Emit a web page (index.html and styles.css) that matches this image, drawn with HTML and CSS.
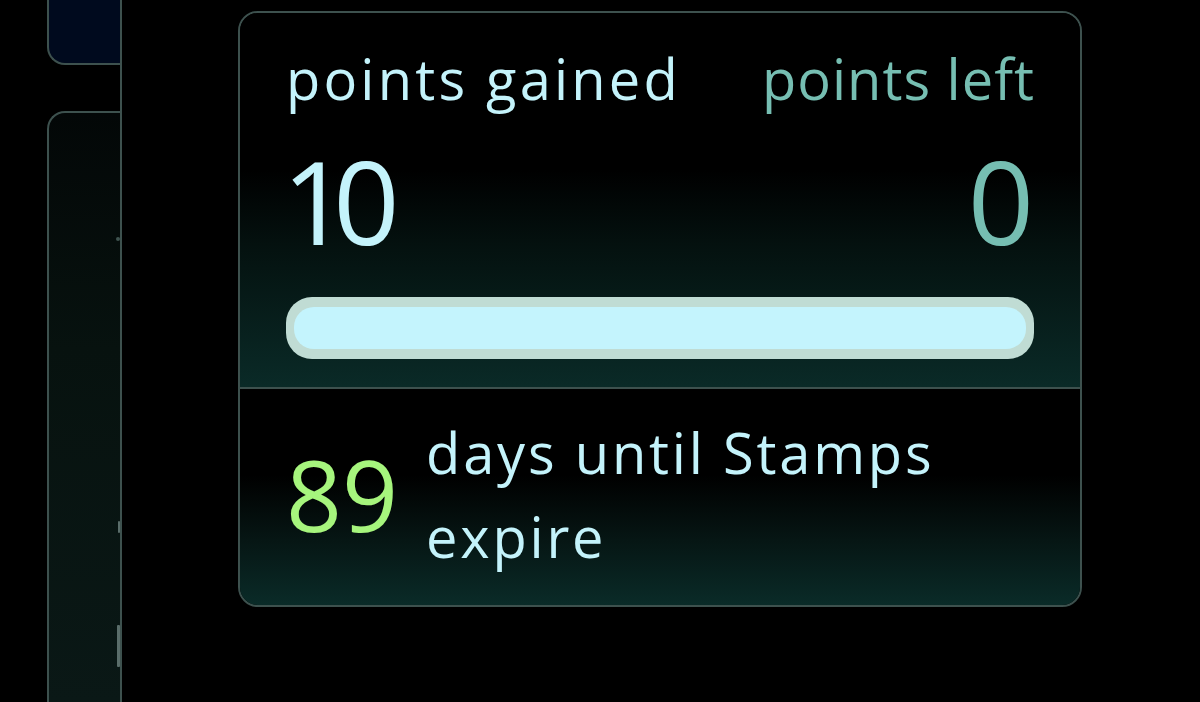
FILE: index.html
```html
<!DOCTYPE html>
<html>
<head>
<meta charset="utf-8">
<link rel="stylesheet" href="styles.css">
</head>
<body>
<div class="page">
  <aside class="sidebar">
    <div class="side-card side-top"></div>
    <div class="side-card side-bottom">
      <span class="mark mark-a"></span>
      <span class="mark mark-b"></span>
      <span class="mark mark-c"></span>
    </div>
  </aside>
  <main class="main">
    <section class="card">
      <div class="points">
        <div class="labels">
          <span class="label-gained">points gained</span>
          <span class="label-left">points left</span>
        </div>
        <div class="values">
          <span class="value-gained">10</span>
          <span class="value-left">0</span>
        </div>
        <div class="bar"><div class="bar-fill" style="width:100%"></div></div>
      </div>
      <div class="expiry">
        <span class="days">89</span>
        <span class="expiry-text">days until Stamps<br>expire</span>
      </div>
    </section>
  </main>
</div>
</body>
</html>
```
FILE: styles.css
```css
html, body {
  margin: 0;
  padding: 0;
  background: #000;
  width: 1200px;
  height: 702px;
  overflow: hidden;
  font-family: "Open Sans", "Lato", sans-serif;
}
.page {
  display: flex;
  height: 702px;
}
.sidebar {
  width: 73px;
  flex: none;
  border-right: 2px solid #3d514e;
  display: flex;
  flex-direction: column;
  gap: 46px;
  padding-left: 47px;
  box-sizing: content-box;
}
.side-card {
  border: 2px solid #3d514e;
  border-right: none;
}
.side-top {
  height: 67px;
  margin-top: -2px;
  border-top: none;
  border-bottom-left-radius: 18px;
  background: #000a1e;
  box-sizing: border-box;
}
.side-bottom {
  flex: 1;
  border-bottom: none;
  border-top-left-radius: 18px;
  background: linear-gradient(180deg, #030707 0%, #07120f 40%, #0a1816 100%);
  position: relative;
}
.mark {
  position: absolute;
  right: 0;
  width: 3px;
  background: #5a6d6a;
  border-radius: 1px;
}
.mark-a { top: 124px; height: 4px; width: 4px; border-radius: 2px; background: #3f5350; }
.mark-b { top: 408px; height: 12px; width: 2px; }
.mark-c { top: 512px; height: 42px; }
.main {
  flex: 1;
  padding: 11px 0 0 116px;
}
.card {
  width: 844px;
  height: 596px;
  box-sizing: border-box;
  border: 2px solid #3d514e;
  border-radius: 20px;
  overflow: hidden;
  display: flex;
  flex-direction: column;
}
.points {
  height: 374px;
  border-bottom: 2px solid #3d514e;
  padding: 0 46px 0 46px;
  box-sizing: content-box;
  background: linear-gradient(180deg, #000 0%, #000 42%, #04110f 62%, #0a2a27 100%);
  display: flex;
  flex-direction: column;
}
.labels {
  display: flex;
  justify-content: space-between;
  font-size: 56px;
  line-height: 60px;
  margin-top: 35px;
}
.label-gained { color: #c4f3fb; letter-spacing: 3.2px; }
.label-left { color: #76beb2; letter-spacing: 1px; margin-right: -1px; }
.values {
  display: flex;
  justify-content: space-between;
  font-size: 116px;
  line-height: 120px;
  margin-top: 32px;
}
.value-gained { color: #c4f3fb; letter-spacing: -15px; margin-left: -4px; }
.value-left { color: #76beb2; }
.bar {
  margin-top: 37px;
  height: 62px;
  box-sizing: border-box;
  border-radius: 26px;
  background: #c0dcd4;
  padding: 10px 8px;
}
.bar-fill {
  height: 100%;
  border-radius: 20px;
  background: #c4f4fd;
}
.expiry {
  flex: 1;
  display: flex;
  align-items: center;
  padding: 0 46px 6px 46px;
  gap: 28px;
  background: linear-gradient(180deg, #000 0%, #000 40%, #061614 70%, #0a2b28 100%);
}
.days {
  color: #a6f57d;
  font-size: 98px;
  line-height: 100px;
}
.expiry-text {
  color: #c4f3fb;
  font-size: 56px;
  line-height: 84px;
  letter-spacing: 2.8px;
}
```
